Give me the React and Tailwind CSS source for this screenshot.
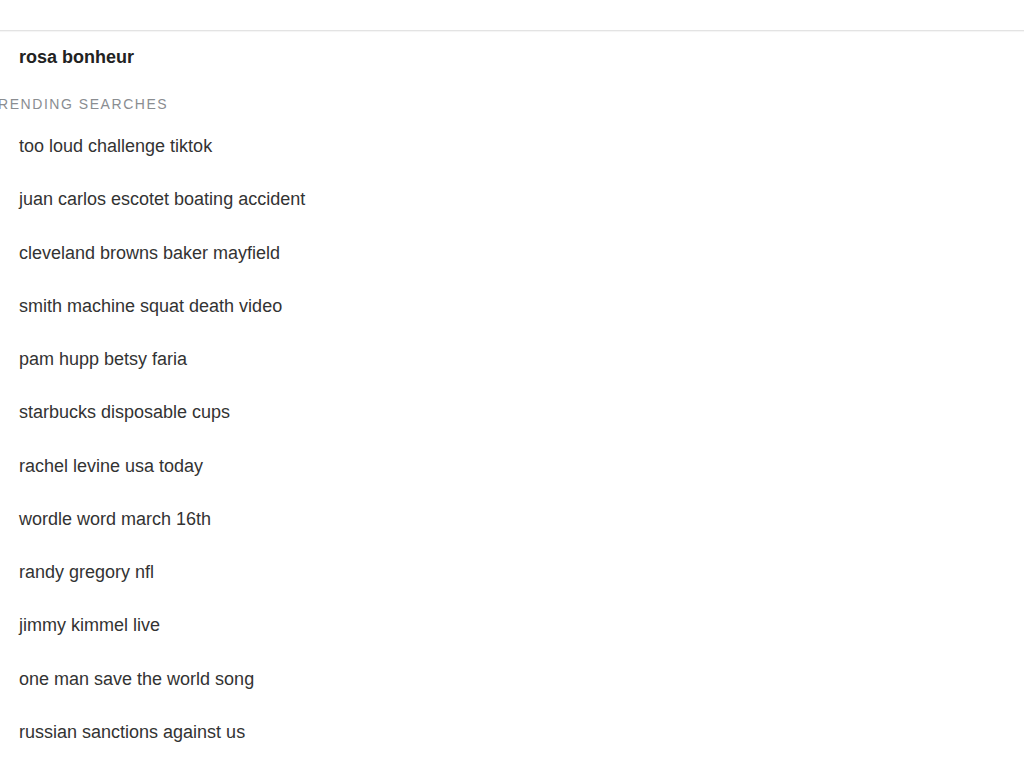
const trending = [
  "too loud challenge tiktok",
  "juan carlos escotet boating accident",
  "cleveland browns baker mayfield",
  "smith machine squat death video",
  "pam hupp betsy faria",
  "starbucks disposable cups",
  "rachel levine usa today",
  "wordle word march 16th",
  "randy gregory nfl",
  "jimmy kimmel live",
  "one man save the world song",
  "russian sanctions against us",
];

export default function App() {
  return (
    <div className="h-[768px] w-full overflow-hidden bg-white font-['Liberation_Sans',Arial,sans-serif]">
      <div className="h-[31px] border-b border-[#e3e3e3] shadow-[0_1px_1px_rgba(0,0,0,0.04)]" />
      <ul>
        <li className="flex h-[52px] items-center pl-[19px] text-[18px] font-bold text-[#222]">
          rosa bonheur
        </li>
        <li className="-ml-[12px] h-[37px] whitespace-nowrap pt-[12px] text-[14px] leading-[18px] uppercase tracking-[0.11em] text-[#8a8d91]">
          Trending searches
        </li>
        {trending.map((t) => (
          <li key={t} className="flex h-[53.25px] items-center pl-[19px] text-[18px] text-[#333]">
            {t}
          </li>
        ))}
      </ul>
    </div>
  );
}
